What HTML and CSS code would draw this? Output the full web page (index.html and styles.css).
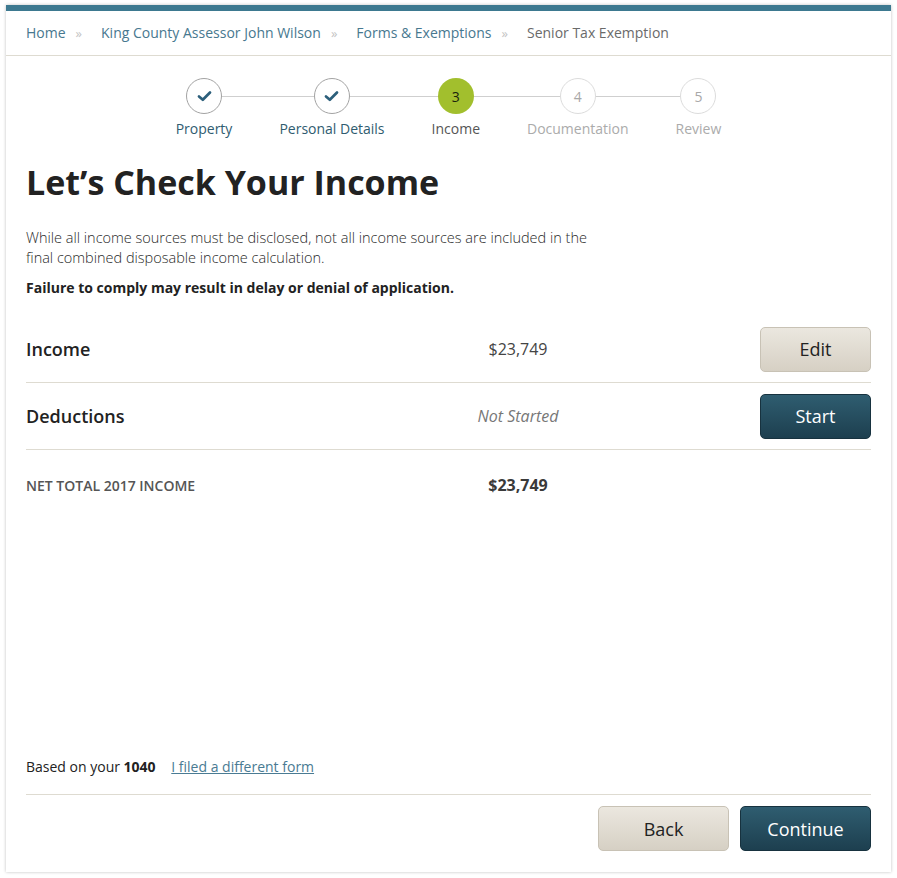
FILE: index.html
```html
<!DOCTYPE html>
<html lang="en">
<head>
    <meta charset="UTF-8">
    <meta name="viewport" content="width=device-width, initial-scale=1.0">
    <title>Senior Tax Exemption - Income</title>
    <link rel="stylesheet" href="styles.css">
</head>
<body>
    <div class="card">
        <!-- Breadcrumbs -->
        <nav class="crumbs">
            <a href="#">Home</a><span class="sep">&raquo;</span>
            <a href="#">King County Assessor John Wilson</a><span class="sep">&raquo;</span>
            <a href="#">Forms &amp; Exemptions</a><span class="sep">&raquo;</span>
            <span class="current">Senior Tax Exemption</span>
        </nav>

        <!-- Steps -->
        <ol class="steps">
            <li class="step done">
                <span class="dot">
                    <svg width="15" height="12" viewBox="0 0 15 12"><path d="M2 6.5 L5.8 9.8 L13 2.5" fill="none" stroke="#2c5f7b" stroke-width="2.7" stroke-linecap="round" stroke-linejoin="round"/></svg>
                </span>
                <span class="label">Property</span>
            </li>
            <li class="step done">
                <span class="dot">
                    <svg width="15" height="12" viewBox="0 0 15 12"><path d="M2 6.5 L5.8 9.8 L13 2.5" fill="none" stroke="#2c5f7b" stroke-width="2.7" stroke-linecap="round" stroke-linejoin="round"/></svg>
                </span>
                <span class="label">Personal Details</span>
            </li>
            <li class="step active">
                <span class="dot">3</span>
                <span class="label">Income</span>
            </li>
            <li class="step todo">
                <span class="dot">4</span>
                <span class="label">Documentation</span>
            </li>
            <li class="step todo">
                <span class="dot">5</span>
                <span class="label">Review</span>
            </li>
        </ol>

        <main class="content">
            <h1>Let&rsquo;s Check Your Income</h1>
            <p class="intro">While all income sources must be disclosed, not all income sources are included in the final combined disposable income calculation.</p>
            <p class="warning">Failure to comply may result in delay or denial of application.</p>

            <div class="summary">
                <div class="row">
                    <span class="name">Income</span>
                    <span class="value">$23,749</span>
                    <button class="btn btn-light">Edit</button>
                </div>
                <div class="row">
                    <span class="name">Deductions</span>
                    <span class="value pending">Not Started</span>
                    <button class="btn btn-dark">Start</button>
                </div>
                <div class="row total">
                    <span class="name">Net Total 2017 Income</span>
                    <span class="value">$23,749</span>
                </div>
            </div>
        </main>

        <footer class="form-footer">
            <p class="based">Based on your <strong>1040</strong> <a href="#">I filed a different form</a></p>
            <div class="actions">
                <button class="btn btn-light btn-wide">Back</button>
                <button class="btn btn-dark btn-wide">Continue</button>
            </div>
        </footer>
    </div>
</body>
</html>
```

FILE: styles.css
```css
/* Global */
body {
    margin: 0;
    padding: 5px 6px 6px 6px;
    background: #fff;
    font-family: 'Open Sans', 'Liberation Sans', sans-serif;
    color: #222;
}

.card {
    height: 867px;
    box-sizing: border-box;
    border-top: 6px solid #3d7990;
    background: #fff;
    box-shadow: 0 0 3px rgba(0, 0, 0, 0.25);
    display: flex;
    flex-direction: column;
}

/* Breadcrumbs */
.crumbs {
    height: 44px;
    display: flex;
    align-items: center;
    padding: 0 20px;
    border-bottom: 1px solid #dedbd1;
    font-size: 14px;
    line-height: 18px;
}

.crumbs a {
    color: #47788f;
    text-decoration: none;
}

.crumbs .sep {
    color: #c4c4c4;
    margin: 0 19px 0 10px;
    font-size: 13px;
}

.crumbs .current {
    color: #6a6a6a;
}

/* Steps */
.steps {
    list-style: none;
    margin: 22px 0 0 0;
    padding: 0;
    display: flex;
    justify-content: center;
    gap: 47px;
    position: relative;
}

.steps::before {
    content: "";
    position: absolute;
    top: 18px;
    left: 210px;
    right: 200px;
    border-top: 1px solid #cfcfcf;
}

.step {
    display: flex;
    flex-direction: column;
    align-items: center;
    position: relative;
}

.dot {
    width: 36px;
    height: 36px;
    box-sizing: border-box;
    border-radius: 50%;
    background: #fff;
    display: flex;
    align-items: center;
    justify-content: center;
    font-size: 14px;
}

.step.done .dot {
    border: 1px solid #a3a3a3;
}

.step.active .dot {
    background: #a2bf2d;
    color: #1a240c;
}

.step.todo .dot {
    border: 1px solid #dcdcdc;
    color: #a8a8a8;
}

.label {
    margin-top: 6px;
    font-size: 14px;
    line-height: 18px;
}

.step.done .label {
    color: #2f5c70;
}

.step.active .label {
    color: #555;
}

.step.todo .label {
    color: #ababab;
}

/* Content */
.content {
    padding: 0 20px;
}

h1 {
    margin: 22px 0 0 0;
    font-size: 34px;
    line-height: 44px;
    font-weight: 700;
    color: #222;
}

.intro {
    margin: 24px 0 0 0;
    max-width: 580px;
    font-size: 14.5px;
    line-height: 20px;
    font-weight: 300;
    color: #2a2a2a;
}

.warning {
    margin: 10px 0 0 0;
    font-size: 14px;
    line-height: 20px;
    font-weight: 700;
    color: #222;
}

/* Summary rows */
.summary {
    margin-top: 18px;
}

.row {
    display: grid;
    grid-template-columns: 412px 160px 1fr;
    align-items: center;
    height: 66px;
    border-bottom: 1px solid #dedbd1;
}

.row .name {
    font-size: 18px;
    font-weight: 600;
    color: #222;
}

.row .value {
    text-align: center;
    font-size: 16px;
    color: #444;
}

.row .value.pending {
    font-style: italic;
    color: #777;
}

.row .btn {
    justify-self: end;
}

.row.total {
    border-bottom: none;
    height: 70px;
}

.row.total .name {
    font-size: 14px;
    font-weight: 600;
    text-transform: uppercase;
    color: #555;
}

.row.total .value {
    font-weight: 700;
    color: #3a3a3a;
}

/* Buttons */
.btn {
    width: 111px;
    height: 45px;
    border-radius: 5px;
    font-family: inherit;
    font-size: 18px;
    cursor: pointer;
}

.btn-light {
    background: linear-gradient(#ebe7df, #d6d0c4);
    border: 1px solid #c8c2b5;
    color: #222;
}

.btn-dark {
    background: linear-gradient(#2f5d70, #1d3f4f);
    border: 1px solid #17323f;
    color: #fff;
}

.btn-wide {
    width: 131px;
}

/* Footer */
.form-footer {
    margin-top: auto;
    padding: 0 20px 21px 20px;
}

.based {
    margin: 0;
    padding-bottom: 17px;
    border-bottom: 1px solid #dedbd1;
    font-size: 14px;
    line-height: 20px;
    color: #222;
}

.based strong {
    font-weight: 700;
}

.based a {
    margin-left: 12px;
    color: #4a7b93;
    text-decoration: underline;
}

.actions {
    display: flex;
    justify-content: flex-end;
    gap: 11px;
    margin-top: 11px;
}
```
